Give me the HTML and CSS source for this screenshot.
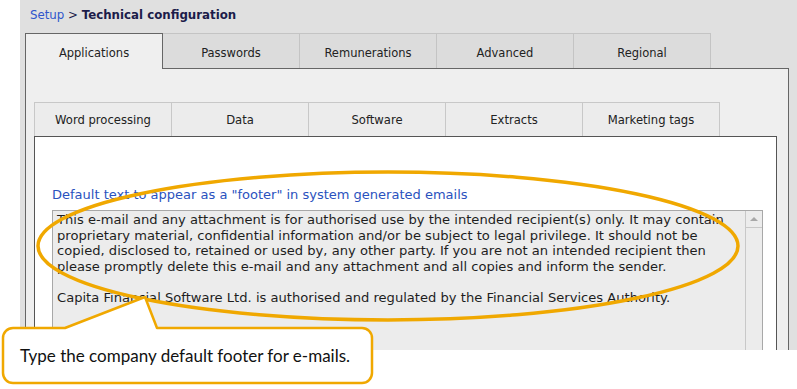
FILE: index.html
```html
<!DOCTYPE html>
<html lang="en">
<head>
    <meta charset="UTF-8">
    <title>Technical configuration</title>
    <link rel="stylesheet" href="styles.css">
</head>
<body>
    <div class="shot">
        <div class="crumb"><span class="crumb-link">Setup</span> &gt; <b>Technical configuration</b></div>

        <!-- Haupt-Reiter -->
        <div class="tabs">
            <div class="tab active">Applications</div>
            <div class="tab">Passwords</div>
            <div class="tab">Remunerations</div>
            <div class="tab">Advanced</div>
            <div class="tab">Regional</div>
        </div>

        <div class="panel">
            <!-- Unter-Reiter -->
            <div class="subtabs">
                <div class="subtab">Word processing</div>
                <div class="subtab">Data</div>
                <div class="subtab">Software</div>
                <div class="subtab">Extracts</div>
                <div class="subtab">Marketing tags</div>
            </div>

            <div class="inner">
                <div class="field-label">Default text to appear as a "footer" in system generated emails</div>
                <div class="memo">
                    <div class="memo-text">This e-mail and any attachment is for authorised use by the intended recipient(s) only. It may contain
proprietary material, confidential information and/or be subject to legal privilege. It should not be
copied, disclosed to, retained or used by, any other party. If you are not an intended recipient then
please promptly delete this e-mail and any attachment and all copies and inform the sender.

Capita Financial Software Ltd. is authorised and regulated by the Financial Services Authority.</div>
                    <div class="memo-scroll">
                        <div class="scroll-up"></div>
                    </div>
                </div>
            </div>
        </div>
    </div>

    <!-- Markierung und Hinweis -->
    <svg class="annot" width="797" height="389" viewBox="0 0 797 389">
        <ellipse cx="388" cy="246" rx="350" ry="74" fill="none" stroke="#f0a800" stroke-width="3.5"/>
        <path d="M13 328 L65 328 L145 297 L157 328 L362 328 A10 10 0 0 1 372 338 L372 373 A10 10 0 0 1 362 383 L13 383 A10 10 0 0 1 3 373 L3 338 A10 10 0 0 1 13 328 Z"
              fill="#ffffff" stroke="#f0a800" stroke-width="2.5" stroke-linejoin="round"/>
    </svg>
    <div class="callout-text">Type the company default footer for e-mails.</div>
</body>
</html>
```

FILE: styles.css
```css
/* Grundlayout */
body {
    margin: 0;
    background: #ffffff;
    font-family: "DejaVu Sans", Verdana, sans-serif;
    position: relative;
    width: 797px;
    height: 389px;
    overflow: hidden;
}

.shot {
    margin-left: 20px;
    width: 777px;
    height: 350px;
    overflow: hidden;
    background: #e0e0e0;
}

/* Brotkrumen */
.crumb {
    box-sizing: border-box;
    height: 33px;
    padding: 7px 0 0 10px;
    font-size: 11.8px;
    line-height: 16px;
    color: #1c1c4a;
}
.crumb-link {
    color: #2f55cc;
}

/* Reiter */
.tabs {
    display: flex;
    align-items: flex-end;
    margin-left: 5px;
    height: 35px;
}
.tab {
    box-sizing: border-box;
    width: 138px;
    height: 35px;
    margin-right: -1px;
    padding-top: 3px;
    background: #dcdcdc;
    border: 1px solid #c4c4c4;
    border-bottom: none;
    display: flex;
    align-items: center;
    justify-content: center;
    font-size: 11.5px;
    color: #222;
}
.tab.active {
    background: #efefef;
    border-color: #666;
    height: 36px;
    padding-bottom: 1px;
    margin-bottom: -1px;
    position: relative;
    z-index: 1;
}

.panel {
    box-sizing: border-box;
    margin-left: 5px;
    width: 764px;
    height: 290px;
    background: #efefef;
    border: 1px solid #666;
    padding: 33px 11px 0 8px;
}

/* Unter-Reiter */
.subtabs {
    display: flex;
    height: 34px;
}
.subtab {
    box-sizing: border-box;
    width: 138px;
    margin-right: -1px;
    background: #ececec;
    border: 1px solid #c8c8c8;
    border-bottom: none;
    display: flex;
    align-items: center;
    justify-content: center;
    font-size: 11.6px;
    color: #222;
}

.inner {
    background: #ffffff;
    border: 1px solid #555;
    height: 240px;
    padding: 50px 13px 0 17px;
}

.field-label {
    font-size: 13px;
    line-height: 15px;
    color: #2a52be;
    margin-bottom: 8px;
}

/* Textfeld */
.memo {
    display: flex;
    height: 200px;
    background: #ececec;
    border: 1px solid #a8a8a8;
}
.memo-text {
    flex: 1;
    padding: 1px 4px 0 4px;
    font-size: 13.1px;
    line-height: 15.6px;
    color: #1e1e1e;
    white-space: pre;
    overflow: hidden;
}
.memo-scroll {
    width: 16px;
    border-left: 1px solid #c8c8c8;
}
.scroll-up {
    height: 16px;
    border-bottom: 1px solid #c8c8c8;
    display: flex;
    align-items: center;
    justify-content: center;
}
.scroll-up::before {
    content: "";
    border-left: 4px solid transparent;
    border-right: 4px solid transparent;
    border-bottom: 4px solid #a8a8a8;
}

/* Hinweis */
.annot {
    position: absolute;
    left: 0;
    top: 0;
    pointer-events: none;
}
.callout-text {
    position: absolute;
    left: 3px;
    top: 328px;
    width: 369px;
    height: 55px;
    box-sizing: border-box;
    padding-left: 17px;
    display: flex;
    align-items: center;
    font-family: Lato, "Open Sans", sans-serif;
    font-size: 17px;
    color: #111;
}
```
